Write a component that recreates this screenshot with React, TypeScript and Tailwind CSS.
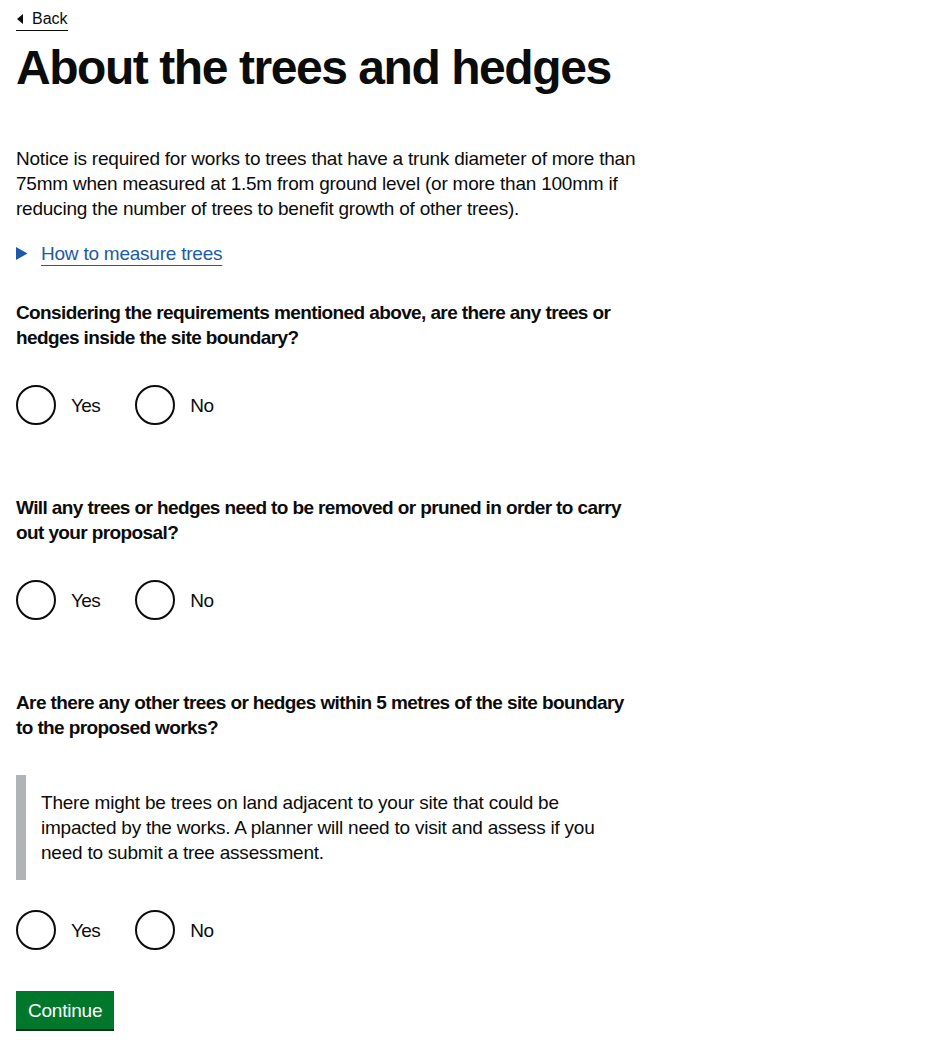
import { useState } from "react";

type Answer = "yes" | "no" | null;

function BackLink() {
  return (
    <a
      href="#"
      className="inline-flex items-center gap-[8px] border-b border-[#0b0c0c] pb-px text-[16px] leading-[20px] text-[#0b0c0c]"
    >
      <svg width="7" height="10" viewBox="0 0 7 10" className="ml-[1px]" aria-hidden="true">
        <path d="M6 0 L0 5 L6 10 Z" fill="#0b0c0c" />
      </svg>
      Back
    </a>
  );
}

function Radio({ label, checked, onSelect }: { label: string; checked: boolean; onSelect: () => void }) {
  return (
    <label className="mr-5 flex cursor-pointer items-center" onClick={onSelect}>
      <span className="flex h-10 w-10 items-center justify-center rounded-full border-2 border-[#0b0c0c]">
        {checked && <span className="h-5 w-5 rounded-full bg-[#0b0c0c]" />}
      </span>
      <span className="px-[15px] text-[19px] leading-[25px] tracking-[-0.03em] text-[#0b0c0c]">{label}</span>
    </label>
  );
}

function Question({
  legend,
  hint,
  value,
  onChange,
  className,
}: {
  legend: string;
  hint?: string;
  value: Answer;
  onChange: (v: Answer) => void;
  className?: string;
}) {
  return (
    <fieldset className={className}>
      <legend className="text-[19px] font-bold leading-[25px] tracking-[-0.032em] text-[#0b0c0c]">{legend}</legend>
      {hint && (
        <div className="mt-[35px] border-l-[10px] border-[#b1b4b6] py-[15px] pl-[15px] pr-[15px] text-[19px] leading-[25px] tracking-[-0.012em] text-[#0b0c0c]">
          {hint}
        </div>
      )}
      <div className={`flex ${hint ? "mt-[30px]" : "mt-[35px]"}`}>
        <Radio label="Yes" checked={value === "yes"} onSelect={() => onChange("yes")} />
        <Radio label="No" checked={value === "no"} onSelect={() => onChange("no")} />
      </div>
    </fieldset>
  );
}

export default function App() {
  const [inside, setInside] = useState<Answer>(null);
  const [removed, setRemoved] = useState<Answer>(null);
  const [nearby, setNearby] = useState<Answer>(null);
  const [open, setOpen] = useState(false);

  return (
    <div className="min-h-screen bg-white px-4 pt-[7px] font-['Liberation_Sans',Arial,sans-serif] text-[#0b0c0c]">
      <div className="max-w-[624px]">
        <BackLink />

        <h1 className="mt-[12px] text-[48px] font-bold leading-[50px] tracking-[-0.03em]">About the trees and hedges</h1>

        <p className="mt-[53px] text-[19px] leading-[25px] tracking-[-0.012em]">
          Notice is required for works to trees that have a trunk diameter of more than 75mm when measured at 1.5m
          from ground level (or more than 100mm if reducing the number of trees to benefit growth of other trees).
        </p>

        {/* Details */}
        <div className="mt-[20px]">
          <button
            onClick={() => setOpen(!open)}
            className="flex items-center text-[19px] leading-[25px] tracking-[-0.012em] text-[#1d5aa8]"
          >
            <svg width="12" height="13" viewBox="0 0 12 13" className="mr-[13px]" aria-hidden="true">
              <path d="M0 0 L11.5 6.5 L0 13 Z" fill="#1d5aa8" />
            </svg>
            <span className="underline decoration-1 underline-offset-[5px]">How to measure trees</span>
          </button>
          {open && (
            <div className="mt-[15px] border-l-[5px] border-[#b1b4b6] py-[15px] pl-[20px] text-[19px] leading-[25px]">
              Measure the trunk diameter at 1.5m above ground level.
            </div>
          )}
        </div>

        <Question
          className="mt-[34px]"
          legend="Considering the requirements mentioned above, are there any trees or hedges inside the site boundary?"
          value={inside}
          onChange={setInside}
        />

        <Question
          className="mt-[70px]"
          legend="Will any trees or hedges need to be removed or pruned in order to carry out your proposal?"
          value={removed}
          onChange={setRemoved}
        />

        <Question
          className="mt-[70px]"
          legend="Are there any other trees or hedges within 5 metres of the site boundary to the proposed works?"
          hint="There might be trees on land adjacent to your site that could be impacted by the works. A planner will need to visit and assess if you need to submit a tree assessment."
          value={nearby}
          onChange={setNearby}
        />

        <button className="mt-[41px] border-2 border-transparent bg-[#00782c] px-[10px] pb-[7px] pt-[8px] text-[19px] leading-[19px] tracking-[-0.012em] text-white shadow-[0_2px_0_#002d18]">
          Continue
        </button>
      </div>
    </div>
  );
}
